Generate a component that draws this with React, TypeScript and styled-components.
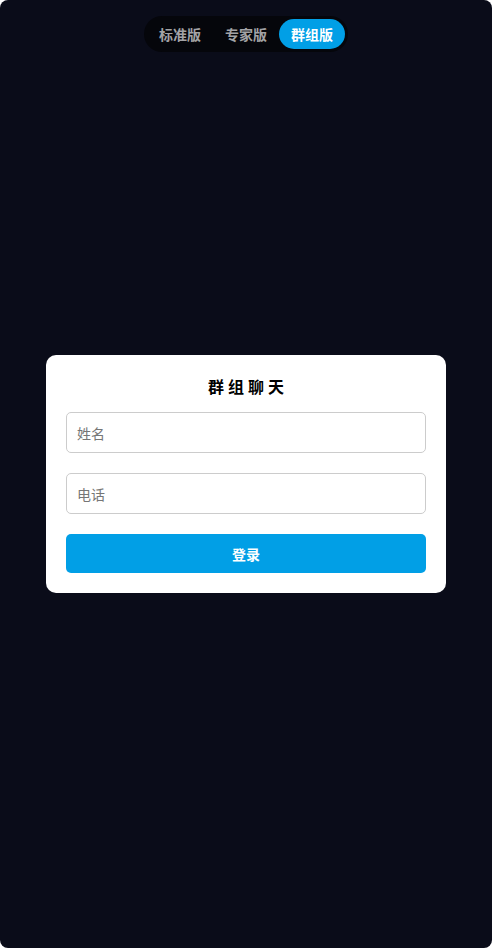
import React, { useState } from "react";
import styled, { createGlobalStyle } from "styled-components";

const Global = createGlobalStyle`
  html, body { margin: 0; padding: 0; background: #ffffff; }
  * { box-sizing: border-box; }
  body { font-family: "Noto Sans CJK SC", "Noto Sans", sans-serif; }
`;

const Page = styled.div`
  width: 492px;
  height: 948px;
  background: #0a0c19;
  border-radius: 8px;
  display: flex;
  flex-direction: column;
  align-items: center;
  overflow: hidden;
`;

const TabBar = styled.div`
  margin-top: 16px;
  display: flex;
  padding: 3px;
  background: #05060b;
  border-radius: 18px;
`;

const Tab = styled.button<{ $active?: boolean }>`
  height: 30px;
  padding: 0 12px;
  border: none;
  border-radius: 15px;
  font-family: inherit;
  font-size: 14px;
  font-weight: 700;
  line-height: 30px;
  cursor: pointer;
  background: ${(p) => (p.$active ? "#019fe6" : "transparent")};
  color: ${(p) => (p.$active ? "#ffffff" : "#a3a3a6")};
`;

const Center = styled.div`
  flex: 1;
  display: flex;
  align-items: center;
  justify-content: center;
  width: 100%;
  padding-bottom: 52px;
`;

const Card = styled.div`
  width: 400px;
  background: #ffffff;
  border-radius: 10px;
  padding: 20px;
  display: flex;
  flex-direction: column;
`;

const Title = styled.div`
  text-align: center;
  font-size: 16px;
  font-weight: 700;
  line-height: 22px;
  letter-spacing: 4px;
  text-indent: 4px;
  color: #000000;
  margin-bottom: 15px;
`;

const Input = styled.input`
  height: 41px;
  width: 100%;
  border: 1px solid #cccccc;
  border-radius: 5px;
  padding: 0 10px;
  font-family: inherit;
  font-size: 14px;
  color: #222;
  margin-bottom: 20px;
  outline: none;
  &::placeholder { color: #767676; }
`;

const Submit = styled.button`
  height: 39px;
  width: 100%;
  border: none;
  border-radius: 5px;
  background: #019fe6;
  color: #ffffff;
  font-family: inherit;
  font-size: 14px;
  font-weight: 700;
  cursor: pointer;
`;

const tabs = ["标准版", "专家版", "群组版"];

export default function App() {
  const [active, setActive] = useState(2);
  return (
    <>
      <Global />
      <Page>
        <TabBar>
          {tabs.map((t, i) => (
            <Tab key={t} $active={i === active} onClick={() => setActive(i)}>
              {t}
            </Tab>
          ))}
        </TabBar>
        <Center>
          <Card>
            <Title>群组聊天</Title>
            <Input placeholder="姓名" />
            <Input placeholder="电话" />
            <Submit>登录</Submit>
          </Card>
        </Center>
      </Page>
    </>
  );
}
